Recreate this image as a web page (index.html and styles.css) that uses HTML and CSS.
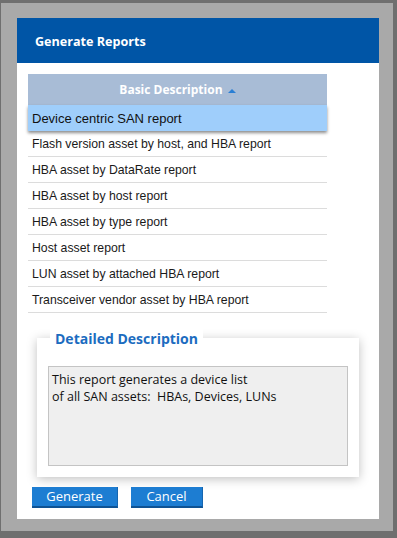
FILE: index.html
```html
<!DOCTYPE html>
<html lang="en">
<head>
    <meta charset="UTF-8">
    <title>Generate Reports</title>
    <link rel="stylesheet" href="styles.css">
</head>
<body>
    <div class="frame">
        <div class="dialog">
            <div class="dialog-header">Generate Reports</div>

            <div class="dialog-body">
                <div class="report-table">
                    <div class="table-head">Basic Description <span class="sort-arrow"></span></div>
                    <div class="row selected">Device centric SAN report</div>
                    <div class="row">Flash version asset by host, and HBA report</div>
                    <div class="row">HBA asset by DataRate report</div>
                    <div class="row">HBA asset by host report</div>
                    <div class="row">HBA asset by type report</div>
                    <div class="row">Host asset report</div>
                    <div class="row">LUN asset by attached HBA report</div>
                    <div class="row">Transceiver vendor asset by HBA report</div>
                </div>

                <div class="detail">
                    <div class="detail-legend">Detailed Description</div>
                    <div class="detail-text">This report generates a device list<br>of all SAN assets:&nbsp; HBAs, Devices, LUNs</div>
                </div>

                <div class="actions">
                    <button class="btn btn-generate">Generate</button>
                    <button class="btn btn-cancel">Cancel</button>
                </div>
            </div>
        </div>
    </div>
</body>
</html>
```

FILE: styles.css
```css
/* Window frame */
body {
    margin: 0;
    font-family: "Open Sans", "Noto Sans", sans-serif;
}
.frame {
    width: 397px;
    height: 538px;
    box-sizing: border-box;
    background-color: #a9a9a9;
    border-style: solid;
    border-color: #6f6f6f;
    border-width: 3px 4px 7px 1px;
    padding: 15px 14px 12px 16px;
}
.dialog {
    background-color: #ffffff;
    height: 100%;
}
.dialog-header {
    height: 45px;
    line-height: 47px;
    padding-left: 18px;
    background-color: #0055a6;
    color: #ffffff;
    font-weight: 700;
    font-size: 12.6px;
}
.dialog-body {
    padding: 11px 0 0 0;
}

/* Report list */
.report-table {
    margin-left: 11px;
    width: 299px;
    font-family: "Liberation Sans", Arial, sans-serif;
}
.table-head {
    height: 31px;
    line-height: 31px;
    background-color: #a8bcd6;
    color: #ffffff;
    text-align: center;
    font-family: "Open Sans", "Noto Sans", sans-serif;
    font-weight: 700;
    font-size: 12px;
}
.sort-arrow {
    display: inline-block;
    width: 0;
    height: 0;
    border-left: 4px solid transparent;
    border-right: 4px solid transparent;
    border-bottom: 4px solid #2a7fd4;
    vertical-align: middle;
    margin-left: 2px;
}
.row {
    height: 25px;
    line-height: 27px;
    padding-left: 4px;
    border-bottom: 1px solid #dcdcdc;
    font-size: 12.25px;
    color: #1a1a1a;
}
.row.selected {
    height: 26px;
    line-height: 27px;
    border-bottom: none;
    background-color: #9fcefb;
    font-size: 13px;
    color: #111111;
    box-shadow: 0 2px 3px rgba(0, 0, 0, 0.45);
    position: relative;
}

/* Detailed description box */
.detail {
    margin: 25px 0 0 20px;
    width: 322px;
    height: 139px;
    box-sizing: border-box;
    padding: 0 11px;
    background-color: #ffffff;
    box-shadow: 0 2px 10px rgba(0, 0, 0, 0.25);
}
.detail-legend {
    display: inline-block;
    margin: -10px 0 0 2px;
    padding: 0 5px;
    height: 21px;
    line-height: 22px;
    background-color: #ffffff;
    color: #1c6cc0;
    font-weight: 700;
    font-size: 14px;
    vertical-align: top;
}
.detail-text {
    margin-top: 6px;
    height: 100px;
    box-sizing: border-box;
    padding: 4px 3px;
    background-color: #efefef;
    border: 1px solid #c4c4c4;
    color: #111111;
    font-size: 12.5px;
    line-height: 17px;
}

/* Buttons */
.actions {
    display: flex;
    gap: 13px;
    margin: 10px 0 0 15px;
}
.btn {
    height: 21px;
    padding: 0;
    border: none;
    border-bottom: 2px solid #0f5394;
    border-right: 1px solid #1666b0;
    background-color: #1d7dd2;
    color: #ffffff;
    font-family: "Open Sans", "Noto Sans", sans-serif;
    font-size: 13px;
    line-height: 19px;
}
.btn-generate {
    width: 86px;
}
.btn-cancel {
    width: 72px;
}
```
